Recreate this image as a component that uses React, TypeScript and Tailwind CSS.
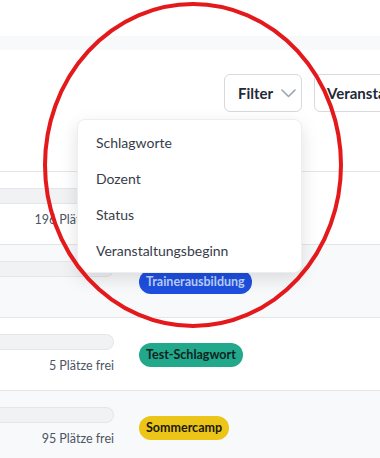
import { useState } from 'react'

type Row = {
  free: string | null
  tag: { label: string; className: string } | null
  striped: boolean
}

const rows: Row[] = [
  { free: '196 Plätze frei', tag: null, striped: false },
  { free: null, tag: { label: 'Trainerausbildung', className: 'bg-[#1f4fe0] text-[#bcd3ff]' }, striped: true },
  { free: '5 Plätze frei', tag: { label: 'Test-Schlagwort', className: 'bg-[#22a98c] text-[#10231f]' }, striped: false },
  { free: '95 Plätze frei', tag: { label: 'Sommercamp', className: 'bg-[#ebc517] text-[#1c1a0c]' }, striped: true },
]

const filterOptions = ['Schlagworte', 'Dozent', 'Status', 'Veranstaltungsbeginn']

function Chevron(): JSX.Element {
  return (
    <svg width="15" height="9" viewBox="0 0 15 9" fill="none" className="shrink-0">
      <path d="M1 1l6.5 6.5L14 1" stroke="#9ca3af" strokeWidth="1.6" strokeLinecap="round" strokeLinejoin="round" />
    </svg>
  )
}

export default function App(): JSX.Element {
  const [open] = useState(true)

  return (
    <div className="relative w-[380px] h-[458px] overflow-hidden bg-white font-['Segoe_UI','Lato',sans-serif] text-[#1f2937]">
      <div className="h-9" />
      <div className="h-[14px] bg-[#f8f9fa]" />

      {/* toolbar */}
      <div className="h-[122px] border-b border-[#e3e5e8] pt-6 pl-[224px] flex gap-3 whitespace-nowrap">
        <button className="h-[38px] w-[78px] shrink-0 flex items-center pl-[13px] gap-2 rounded-md border border-[#d6d9de] bg-white text-[15px] font-bold">
          Filter
          <Chevron />
        </button>
        <button className="h-[38px] shrink-0 flex items-center px-3 gap-2 rounded-md border border-[#d6d9de] bg-white text-[15px] font-bold">
          Veranstaltungsbeginn
          <Chevron />
        </button>
      </div>

      {/* rows */}
      {rows.map((row, i) => (
        <div
          key={i}
          className={`h-[73px] border-b border-[#e3e5e8] flex items-center ${row.striped ? 'bg-[#f8f9fb]' : 'bg-white'}`}
        >
          <div className="w-[114px] shrink-0 flex flex-col items-end gap-[7px]">
            <div className="h-4 w-full rounded-r-full bg-[#f1f2f4] border border-l-0 border-[#e4e6ea]" />
            <span className={`text-[12.5px] leading-[18px] text-[#4b5563] whitespace-nowrap ${row.free ? '' : 'invisible'}`}>
              {row.free ?? '0 Plätze frei'}
            </span>
          </div>
          <div className="pl-[25px]">
            {row.tag && (
              <span className={`inline-flex items-center h-6 px-[7px] rounded-full text-[12.5px] font-bold ${row.tag.className}`}>
                {row.tag.label}
              </span>
            )}
          </div>
        </div>
      ))}

      {/* dropdown menu */}
      {open && (
        <div className="absolute left-[77px] top-[119px] w-[225px] py-1 rounded-lg bg-white border border-[#eceef1] shadow-[0_6px_18px_rgba(0,0,0,0.12)]">
          {filterOptions.map((opt) => (
            <div key={opt} className="h-9 flex items-center pl-[18px] text-[14px] text-[#373c4a]">
              {opt}
            </div>
          ))}
        </div>
      )}

      {/* annotation */}
      <svg className="absolute inset-0 pointer-events-none" width="380" height="458">
        <ellipse cx="193" cy="165" rx="148" ry="161" fill="none" stroke="#e3191c" strokeWidth="4" />
      </svg>
    </div>
  )
}
